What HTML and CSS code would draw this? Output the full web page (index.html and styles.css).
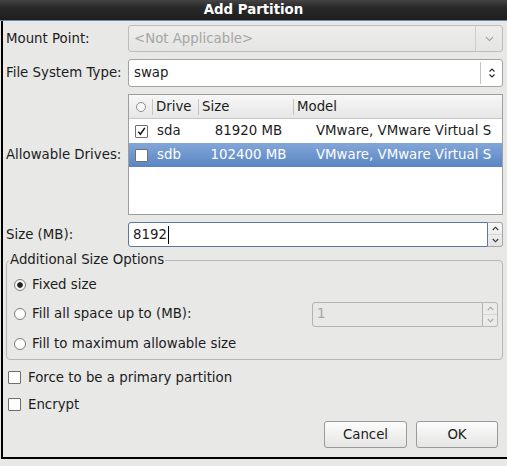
FILE: index.html
```html
<!DOCTYPE html>
<html>
<head>
<meta charset="utf-8">
<title>Add Partition</title>
<link rel="stylesheet" href="styles.css">
</head>
<body>
<div class="window">
  <div class="titlebar">Add Partition</div>
  <div class="body">
    <div class="form">
      <div class="lbl">Mount Point:</div>
      <div class="combo combo-disabled">
        <span class="combo-text">&lt;Not Applicable&gt;</span>
        <span class="combo-btn combo-btn-wide">
          <svg width="9" height="6" viewBox="0 0 9 6"><path d="M1 1.2 L4.5 4.6 L8 1.2" stroke="#9c9c9c" stroke-width="1.1" fill="none"/></svg>
        </span>
      </div>

      <div class="lbl">File System Type:</div>
      <div class="combo">
        <span class="combo-text">swap</span>
        <span class="combo-btn">
          <svg width="8" height="14" viewBox="0 0 8 14"><path d="M1.5 5.5 L4 3 L6.5 5.5 M1.5 8.5 L4 11 L6.5 8.5" stroke="#2a2a2a" stroke-width="1.1" fill="none"/></svg>
        </span>
      </div>

      <div class="lbl">Allowable Drives:</div>
      <div class="tree">
        <div class="tree-head">
          <div class="th th-check"><span class="head-radio"></span></div>
          <div class="th">Drive</div>
          <div class="th">Size</div>
          <div class="th">Model</div>
        </div>
        <div class="tree-row">
          <div class="td td-check"><span class="cb">
            <svg width="11" height="11" viewBox="0 0 11 11"><path d="M2.3 5.6 L4.4 8.2 L8.8 1.8" stroke="#111" stroke-width="1.5" fill="none"/></svg>
          </span></div>
          <div class="td td-drive">sda</div>
          <div class="td td-size">81920 MB</div>
          <div class="td td-model">VMware, VMware Virtual S</div>
        </div>
        <div class="tree-row selected">
          <div class="td td-check"><span class="cb"></span></div>
          <div class="td td-drive">sdb</div>
          <div class="td td-size">102400 MB</div>
          <div class="td td-model">VMware, VMware Virtual S</div>
        </div>
      </div>

      <div class="lbl">Size (MB):</div>
      <div class="spin spin-focus">
        <div class="spin-entry">8192<span class="caret"></span></div>
        <div class="spin-btns">
          <span class="spin-half">
            <svg width="7" height="5" viewBox="0 0 7 5"><path d="M0.8 4 L3.5 1.2 L6.2 4" stroke="#333" stroke-width="1.1" fill="none"/></svg>
          </span>
          <span class="spin-half spin-half-low">
            <svg width="7" height="5" viewBox="0 0 7 5"><path d="M0.8 1 L3.5 3.8 L6.2 1" stroke="#333" stroke-width="1.1" fill="none"/></svg>
          </span>
        </div>
      </div>
    </div>

    <fieldset class="group">
      <legend>Additional Size Options</legend>
      <div class="opt"><span class="radio radio-on"></span>Fixed size</div>
      <div class="opt opt-spin">
        <span class="radio"></span>Fill all space up to (MB):
        <div class="spin spin-disabled">
          <div class="spin-entry">1</div>
          <div class="spin-btns">
            <span class="spin-half">
              <svg width="7" height="5" viewBox="0 0 7 5"><path d="M0.8 4 L3.5 1.2 L6.2 4" stroke="#a8a8a8" stroke-width="1.1" fill="none"/></svg>
            </span>
            <span class="spin-half spin-half-low">
              <svg width="7" height="5" viewBox="0 0 7 5"><path d="M0.8 1 L3.5 3.8 L6.2 1" stroke="#a8a8a8" stroke-width="1.1" fill="none"/></svg>
            </span>
          </div>
        </div>
      </div>
      <div class="opt"><span class="radio"></span>Fill to maximum allowable size</div>
    </fieldset>

    <div class="checks">
      <div class="check"><span class="cb"></span>Force to be a primary partition</div>
      <div class="check"><span class="cb"></span>Encrypt</div>
    </div>

    <div class="buttons">
      <button class="btn">Cancel</button>
      <button class="btn">OK</button>
    </div>
  </div>
</div>
</body>
</html>
```

FILE: styles.css
```css
* { box-sizing: border-box; }

html, body {
  margin: 0;
  padding: 0;
}

body {
  width: 507px;
  height: 466px;
  overflow: hidden;
  background: #e8e8e7;
  font-family: "DejaVu Sans", "Noto Sans", sans-serif;
  font-size: 13.33px;
  line-height: 16px;
  color: #1c1c1c;
}

.titlebar {
  height: 21px;
  background: linear-gradient(#444444, #2a2a2a 35%, #1e1e1e);
  border-bottom: 1px solid #6b86ab;
  color: #ffffff;
  font-weight: bold;
  text-align: center;
  line-height: 20px;
}

.body {
  margin-left: 1px;
  border-left: 2px solid #000;
  border-bottom: 2px solid #000;
  padding: 4px 0 9px 3px;
  background: #e8e8e7;
}

.form {
  display: grid;
  grid-template-columns: 122px 375px;
  grid-template-rows: 27px 28px 121px 25px;
  row-gap: 7px;
}

.lbl {
  align-self: center;
}

/* combo boxes */
.combo {
  display: flex;
  border: 1px solid #a3a3a3;
  border-radius: 3px;
  background: #ffffff;
}

.combo-text {
  flex: 1;
  display: flex;
  align-items: center;
  padding-left: 5px;
}

.combo-btn {
  width: 22px;
  display: flex;
  align-items: center;
  justify-content: center;
  border-left: 1px solid #c4c4c4;
  margin: 2px 0;
}

.combo-btn-wide {
  width: 27px;
  margin: 0;
}

.combo-disabled {
  background: linear-gradient(#ededec, #e5e5e4);
  border-color: #bdbdbd;
  color: #a5a5a5;
}

.combo-disabled .combo-btn {
  border-left-color: #cdcdcd;
}

/* tree view */
.tree {
  border: 1px solid #9e9e9e;
  background: #ffffff;
  overflow: hidden;
}

.tree-head,
.tree-row {
  display: grid;
  grid-template-columns: 23px 46px 95px 1fr;
}

.tree-head {
  height: 24px;
  border-bottom: 1px solid #c6c6c6;
  background: linear-gradient(#f7f7f7, #e6e6e6);
}

.th {
  display: flex;
  align-items: center;
  padding-left: 4px;
  background: linear-gradient(#c4c4c4, #c4c4c4) no-repeat left center / 1px 16px;
}

.th-check {
  justify-content: center;
  padding-left: 0;
  background: none;
}

.head-radio {
  width: 10px;
  height: 10px;
  border: 1px solid #8c8c8c;
  border-radius: 50%;
  background: #fafafa;
}

.tree-row {
  height: 24px;
}

.td {
  display: flex;
  align-items: center;
  white-space: nowrap;
  overflow: hidden;
}

.td-check {
  justify-content: center;
  padding-left: 1px;
}

.td-drive {
  padding-left: 5px;
}

.td-size {
  justify-content: center;
  padding-left: 6px;
}

.td-model {
  padding-left: 23px;
  padding-right: 6px;
}

.tree-row.selected {
  background: linear-gradient(#82a6d9, #5a85c2);
  color: #ffffff;
}

/* checkboxes */
.cb {
  width: 13px;
  height: 13px;
  flex: none;
  border: 1px solid #6f6f6f;
  border-radius: 1px;
  background: #ffffff;
  display: flex;
  align-items: center;
  justify-content: center;
}

/* spin buttons */
.spin {
  display: flex;
}

.spin-entry {
  flex: 1;
  display: flex;
  align-items: center;
  padding-left: 4px;
  background: #ffffff;
  border: 1px solid #5a789f;
  border-radius: 3px 0 0 3px;
}

.caret {
  display: inline-block;
  width: 1px;
  height: 18px;
  background: #000;
  margin-left: 1px;
}

.spin-btns {
  width: 15px;
  display: flex;
  flex-direction: column;
  border: 1px solid #a6a6a6;
  border-left: none;
  border-radius: 0 3px 3px 0;
  background: linear-gradient(#f8f8f8, #e3e3e3);
}

.spin-half {
  flex: 1;
  display: flex;
  align-items: center;
  justify-content: center;
}

.spin-half-low {
  border-top: 1px solid #d6d6d6;
}

.spin-disabled {
  margin-left: auto;
  margin-right: 4px;
  width: 186px;
  height: 25px;
}

.spin-disabled .spin-entry {
  background: #e8e8e7;
  border-color: #b3b3b3;
  color: #a6a6a6;
}

.spin-disabled .spin-btns {
  background: #ebebea;
  border-color: #b8b8b8;
}

/* group box */
.group {
  margin: 5px 0 0 0;
  width: 497px;
  border: 1px solid #b7b7b7;
  border-radius: 4px;
  padding: 2px 0 1px 2px;
  min-width: 0;
}

.group legend {
  padding: 0 1px;
  line-height: 16px;
}

.opt {
  display: flex;
  align-items: center;
  gap: 6px;
  height: 29px;
  padding-left: 5px;
}

.opt-spin {
  height: 30px;
}

.radio {
  width: 12px;
  height: 12px;
  flex: none;
  border: 1px solid #7c7c7c;
  border-radius: 50%;
  background: #ffffff;
}

.radio-on {
  background: radial-gradient(circle, #222 0, #222 2.4px, #f6f6f6 3.2px);
}

/* checks */
.checks {
  margin-top: 4px;
}

.check {
  display: flex;
  align-items: center;
  gap: 7px;
  height: 27px;
  padding-left: 2px;
}

/* buttons */
.buttons {
  display: flex;
  justify-content: flex-end;
  gap: 9px;
  margin-top: 3px;
  padding-right: 9px;
}

.btn {
  width: 82px;
  height: 27px;
  border: 1px solid #9a9a9a;
  border-radius: 3px;
  background: linear-gradient(#fcfcfc, #e5e5e4);
  font-family: inherit;
  font-size: 13.33px;
  color: #1c1c1c;
  padding: 0;
}

.btn:first-child {
  width: 83px;
}
```
